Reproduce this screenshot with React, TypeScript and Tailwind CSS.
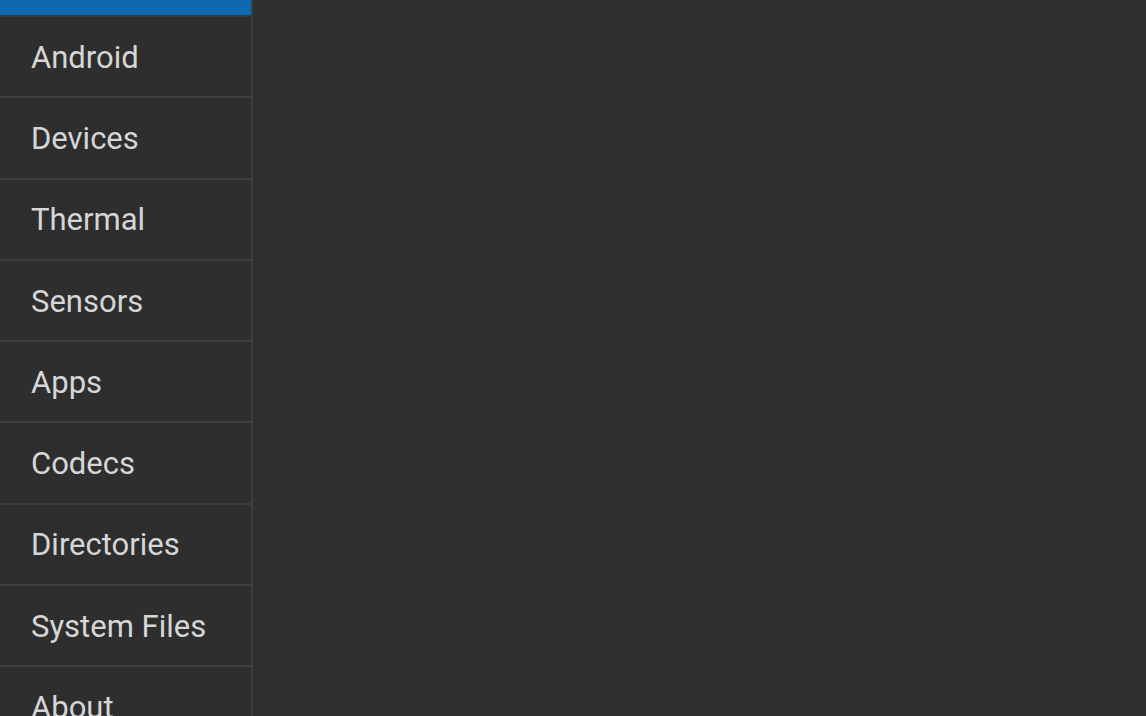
import React from 'react';

const items = ['Android', 'Devices', 'Thermal', 'Sensors', 'Apps', 'Codecs', 'Directories', 'System Files', 'About'];

export default function App() {
  return (
    <div className="flex h-[716px] w-[1146px] overflow-hidden bg-[#2f2f2f] font-['Roboto',sans-serif]">
      {/* Sidebar */}
      <div className="flex w-[253px] shrink-0 flex-col border-r-2 border-[#3e3e3e] bg-[#2e2e2e]">
        <div className="h-[17px] shrink-0 border-b-2 border-[#3a3a3a] bg-[#0f69ae]" />
        {items.map((item) => (
          <div
            key={item}
            className="flex h-[81.25px] shrink-0 items-center border-b-2 border-[#3e3e3e] pl-[31px] pt-[3px] text-[31px] text-[#d6d6d6]"
          >
            {item}
          </div>
        ))}
      </div>
      {/* Content */}
      <div className="flex-1" />
    </div>
  );
}
